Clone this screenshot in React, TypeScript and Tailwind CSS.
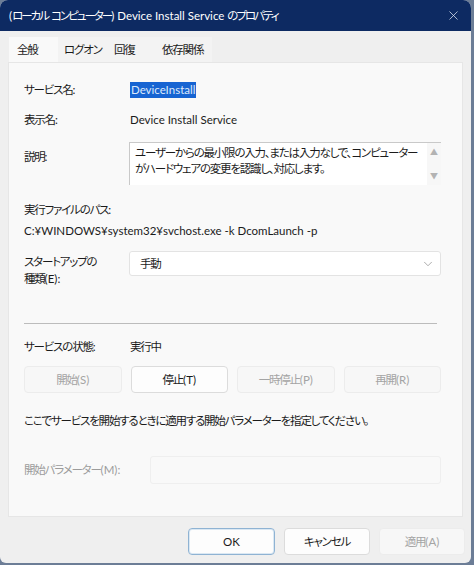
import React from 'react';
import { X, ChevronDown } from 'lucide-react';

const font = {
  fontFamily: 'Lato, "Noto Sans CJK JP", sans-serif',
  fontFeatureSettings: '"palt"',
};

const cjk = /([\u3000-\u30ff\u4e00-\u9fff\uff00-\uffef]+)/;

// Japanese runs are set tighter than the Latin ones around them
const J: React.FC<{ children: string; tight?: boolean }> = ({ children, tight }) => (
  <span>
    {children.split(cjk).map((part, i) =>
      cjk.test(part) ? (
        <span key={i} className={tight ? 'tracking-[-2px]' : 'tracking-[-1.2px]'}>
          {part}
        </span>
      ) : (
        <span key={i}>{part}</span>
      ),
    )}
  </span>
);

const tabs = [
  { label: '全般', cls: 'w-[49px] pl-[8px] bg-[#f9f9f9]' },
  { label: 'ログオン', cls: 'w-[48px] pl-[6px] bg-[#f3f3f3]' },
  { label: '回復', cls: 'w-[46px] pl-[8px] bg-[#f3f3f3]' },
  { label: '依存関係', cls: 'w-[60px] pl-[10px] bg-[#f3f3f3]' },
];

const Btn: React.FC<{ label: string; disabled?: boolean; primary?: boolean; className?: string }> = ({
  label,
  disabled,
  primary,
  className = '',
}) => (
  <div
    className={`flex h-[27px] items-center justify-center rounded-[4px] border ${
      disabled
        ? 'border-[#ececec] bg-[#f7f7f7] text-[#a4a4a4]'
        : primary
        ? 'border-[#8fb3d3] bg-[#fdfdfd] text-[#1b1b1b] shadow-[inset_0_0_0_1px_#dbe8f3]'
        : 'border-[#dcdcdc] bg-[#fdfdfd] text-[#1b1b1b]'
    } ${className}`}
  >
    <J>{label}</J>
  </div>
);

export default function App() {
  return (
    <div className="h-[565px] w-[474px] whitespace-nowrap bg-[#6c7d96] text-[11.5px]" style={font}>
      <div className="flex h-[563px] w-[471px] flex-col overflow-hidden rounded-t-[8px] rounded-b-[6px] bg-[#efefef]">
        {/* title bar */}
        <div className="flex h-[31px] shrink-0 items-center justify-between bg-[#0d2a62] pl-[9px] pr-[10px] text-white">
          <J tight>(ローカル コンピューター) Device Install Service のプロパティ</J>
          <X size={15} strokeWidth={1.2} className="text-[#dfe6f2]" />
        </div>

        {/* tabs */}
        <div className="flex h-[31px] items-end pl-[9px] text-[#1b1b1b]">
          {tabs.map((t) => (
            <div key={t.label} className={`flex h-[25px] items-center ${t.cls}`}>
              <J>{t.label}</J>
            </div>
          ))}
        </div>

        {/* page */}
        <div className="mx-[8px] h-[455px] border border-[#e6e6e6] bg-[#f9f9f9] pl-[15px] pr-[21px] text-[#1b1b1b]">
          <div className="mt-[18px] flex items-center">
            <span className="w-[106px]">
              <J>サービス名:</J>
            </span>
            <span className="bg-[#1764d2] px-[1px] leading-[16px] text-[#dce9fb]">DeviceInstall</span>
          </div>
          <div className="mt-[13px] flex items-center">
            <span className="w-[106px]">
              <J>表示名:</J>
            </span>
            <span>Device Install Service</span>
          </div>
          <div className="mt-[13px] flex">
            <span className="w-[105px] shrink-0 pt-[6px]">
              <J>説明:</J>
            </span>
            <div className="flex h-[43px] min-w-0 flex-1 border-t border-l border-[#c9c9c9] bg-white">
              <div className="min-w-0 flex-1 overflow-hidden pl-[5px] pt-[2px] leading-[16px]">
                <J>ユーザーからの最小限の入力、または入力なしで、コンピューター</J>
                <br />
                <J>がハードウェアの変更を認識し、対応します。</J>
              </div>
              <div className="flex w-[14px] flex-col items-center justify-between bg-[#f7f7f7] py-[5px] text-[8px] leading-[8px] text-[#b3b3b3]">
                <span>▲</span>
                <span>▼</span>
              </div>
            </div>
          </div>
          <div className="mt-[16px]">
            <J>実行ファイルのパス:</J>
          </div>
          <div className="mt-[4px]">C:¥WINDOWS¥system32¥svchost.exe -k DcomLaunch -p</div>
          <div className="mt-[12px] flex">
            <div className="w-[105px] shrink-0 pt-[2px] leading-[17px]">
              <J>スタートアップの</J>
              <br />
              <J>種類(E):</J>
            </div>
            <div className="flex h-[25px] flex-1 items-center justify-between rounded-[3px] border border-[#e3e3e3] bg-white pl-[10px] pr-[5px]">
              <J>手動</J>
              <ChevronDown size={14} strokeWidth={1.2} className="text-[#8a8a8a]" />
            </div>
          </div>
          <div className="mt-[36px] mr-[4px] h-[1px] bg-[#bcbcbc]" />
          <div className="mt-[14px] flex items-center">
            <span className="w-[106px]">
              <J>サービスの状態:</J>
            </span>
            <J>実行中</J>
          </div>
          <div className="mt-[11px] grid grid-cols-4 gap-[9px]">
            <Btn label="開始(S)" disabled />
            <Btn label="停止(T)" />
            <Btn label="一時停止(P)" disabled />
            <Btn label="再開(R)" disabled />
          </div>
          <div className="mt-[19px]">
            <J>ここでサービスを開始するときに適用する開始パラメーターを指定してください。</J>
          </div>
          <div className="mt-[26px] flex items-center">
            <span className="w-[126px] text-[#9c9c9c]">
              <J>開始パラメーター(M):</J>
            </span>
            <div className="h-[28px] flex-1 rounded-[3px] border border-[#efefef] bg-[#f9f9f9]" />
          </div>
        </div>

        {/* dialog buttons */}
        <div className="mt-[11px] flex justify-end gap-[9px] pr-[6px]">
          <Btn label="OK" primary className="w-[87px]" />
          <Btn label="キャンセル" className="w-[86px]" />
          <Btn label="適用(A)" disabled className="w-[86px]" />
        </div>
      </div>
    </div>
  );
}
